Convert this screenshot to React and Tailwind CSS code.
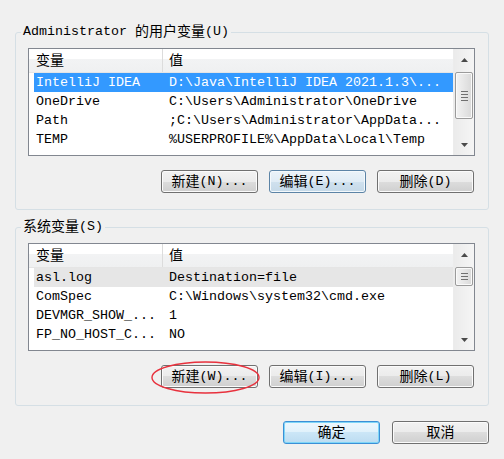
import React from "react";

function T({ s }) {
  const parts = s.split(/([\u4e00-\u9fff]+)/);
  return parts.map((p, i) =>
    /[\u4e00-\u9fff]/.test(p) ? (
      <span key={i} className="text-[14px]">{p}</span>
    ) : (
      <span key={i}>{p}</span>
    )
  );
}

function Btn({ label, variant = "normal" }) {
  const styles = {
    normal:
      "border-[#707070] bg-[linear-gradient(to_bottom,#f2f2f2_0%,#ebebeb_50%,#dddddd_50%,#cfcfcf_100%)] shadow-[inset_0_0_0_1px_#fbfbfb]",
    hover:
      "border-[#5c84a6] bg-[linear-gradient(to_bottom,#ebf3f9_0%,#e0ecf5_50%,#d0e1ee_50%,#c5d9e8_100%)] shadow-[inset_0_0_0_1px_#f4f9fc]",
    def:
      "border-[#3b8fd6] bg-[linear-gradient(to_bottom,#eef7fd_0%,#e0f1fb_50%,#cbe6f7_50%,#bcdcf1_100%)] shadow-[inset_0_0_0_1px_#7fd6f7]",
  };
  return (
    <div
      className={
        "w-[97px] h-[23px] border rounded-[3px] flex items-center justify-center text-black leading-none " +
        styles[variant]
      }
    >
      <span className="flex items-center">
        <T s={label} />
      </span>
    </div>
  );
}

function Arrow({ up }) {
  return (
    <svg width="7" height="4" viewBox="0 0 7 4">
      {up ? (
        <path d="M3.5 0 L7 4 L0 4 Z" fill="#4a4a4a" />
      ) : (
        <path d="M0 0 L7 0 L3.5 4 Z" fill="#4a4a4a" />
      )}
    </svg>
  );
}

function Scrollbar({ thumbTop, thumbH }) {
  return (
    <div className="w-[21px] h-full flex flex-col bg-[linear-gradient(to_right,#ebebeb,#f5f5f5)] border-l border-[#ececec]">
      <div className="h-[22px] flex items-center justify-center">
        <Arrow up />
      </div>
      <div className="flex-1 relative">
        <div
          className="absolute left-[1px] right-[1px] rounded-[2px] border border-[#9b9b9b] bg-[linear-gradient(to_right,#f3f3f3,#e6e6e6_50%,#d9d9d9)] shadow-[inset_0_0_0_1px_#fafafa] flex flex-col items-center justify-center gap-[2px]"
          style={{ top: thumbTop, height: thumbH }}
        >
          {thumbH > 30 ? (
            <>
              <div className="w-[7px] h-[1px] bg-[#707070]" />
              <div className="w-[7px] h-[1px] bg-[#707070]" />
              <div className="w-[7px] h-[1px] bg-[#707070]" />
              <div className="w-[7px] h-[1px] bg-[#707070]" />
            </>
          ) : (
            <>
              <div className="w-[7px] h-[1px] bg-[#707070]" />
              <div className="w-[7px] h-[1px] bg-[#707070]" />
              <div className="w-[7px] h-[1px] bg-[#707070]" />
            </>
          )}
        </div>
      </div>
      <div className="h-[21px] flex items-center justify-center">
        <Arrow />
      </div>
    </div>
  );
}

function List({ rows, sel, thumbTop, thumbH }) {
  return (
    <div className="h-[108px] border border-[#828790] bg-white flex overflow-hidden">
      <div className="flex-1 flex flex-col overflow-hidden">
        <div className="h-[24px] shrink-0 flex border-b border-[#e5e5e5] bg-[linear-gradient(to_bottom,#ffffff_45%,#f2f3f4_45%,#eff0f1_100%)]">
          <div className="w-[134px] pl-[7px] flex items-center border-r border-[#dcdcdc] leading-none">
            <T s="变量" />
          </div>
          <div className="flex-1 pl-[6px] flex items-center leading-none">
            <T s="值" />
          </div>
        </div>
        <div className="flex flex-col pl-[5px]">
          {rows.map((r, i) => {
            const cls =
              i === 0 && sel === "active"
                ? "bg-[#3399ff] text-white"
                : i === 0 && sel === "inactive"
                ? "bg-[#e6e6e6] text-black"
                : "text-black";
            return (
              <div
                key={i}
                className={"h-[19px] shrink-0 flex items-center whitespace-pre leading-none " + cls}
              >
                <div className="w-[135px] pl-[2px]">{r[0]}</div>
                <div className="flex-1">{r[1]}</div>
              </div>
            );
          })}
        </div>
      </div>
      <Scrollbar thumbTop={thumbTop} thumbH={thumbH} />
    </div>
  );
}

function Group({ title, children, pb }) {
  return (
    <div
      className={
        "relative border border-[#d5dfe5] rounded-[3px] pt-[15px] pl-[12px] pr-[13px] " + pb
      }
    >
      <div className="absolute left-[5px] top-[-9px] h-[16px] px-[2px] bg-[#f0f0f0] flex items-center leading-none whitespace-pre">
        <T s={title} />
      </div>
      {children}
    </div>
  );
}

export default function App() {
  const userRows = [
    ["IntelliJ IDEA", "D:\\Java\\IntelliJ IDEA 2021.1.3\\..."],
    ["OneDrive", "C:\\Users\\Administrator\\OneDrive"],
    ["Path", ";C:\\Users\\Administrator\\AppData..."],
    ["TEMP", "%USERPROFILE%\\AppData\\Local\\Temp"],
  ];
  const sysRows = [
    ["asl.log", "Destination=file"],
    ["ComSpec", "C:\\Windows\\system32\\cmd.exe"],
    ["DEVMGR_SHOW_...", "1"],
    ["FP_NO_HOST_C...", "NO"],
  ];
  return (
    <div className="relative w-[504px] h-[459px] overflow-hidden bg-[#f0f0f0] pt-[32px] px-[15px] flex flex-col text-[13.33px] text-black font-['Liberation_Mono','Noto_Sans_CJK_SC',monospace]">
      <Group title="Administrator 的用户变量(U)" pb="pb-[16px]">
        <List rows={userRows} sel="active" thumbTop={1} thumbH={47} />
        <div className="mt-[14px] pr-[1px] flex justify-end gap-[11px]">
          <Btn label="新建(N)..." />
          <Btn label="编辑(E)..." variant="hover" />
          <Btn label="删除(D)" />
        </div>
      </Group>
      <div className="mt-[17px]">
        <Group title="系统变量(S)" pb="pb-[17px]">
          <List rows={sysRows} sel="inactive" thumbTop={1} thumbH={19} />
          <div className="mt-[14px] pr-[1px] flex justify-end gap-[11px]">
            <Btn label="新建(W)..." />
            <Btn label="编辑(I)..." />
            <Btn label="删除(L)" />
          </div>
        </Group>
      </div>
      <div className="mt-[15px] flex justify-end gap-[12px]">
        <Btn label="确定" variant="def" />
        <Btn label="取消" />
      </div>
      <svg
        className="absolute left-0 top-0 pointer-events-none"
        width="504"
        height="459"
      >
        <ellipse
          cx="205.5"
          cy="377.5"
          rx="53.5"
          ry="15.5"
          fill="none"
          stroke="#e8313d"
          strokeWidth="1.4"
        />
      </svg>
    </div>
  );
}
